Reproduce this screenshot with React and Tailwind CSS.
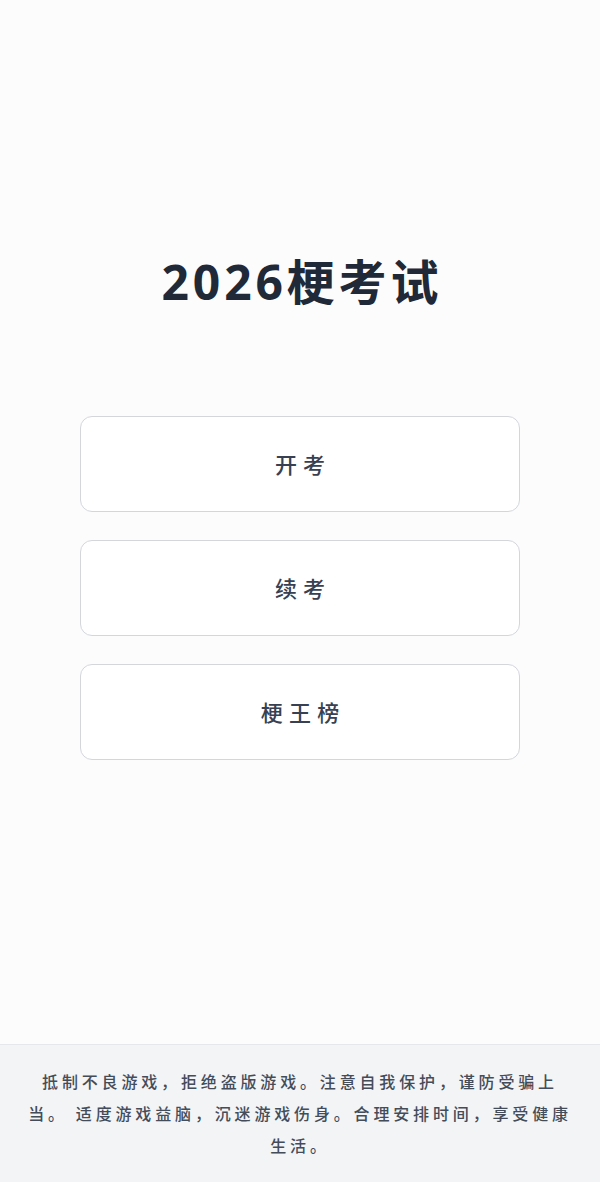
const menu = ['开考', '续考', '梗王榜']

export default function App() {
  return (
    <div
      className="min-h-[1182px] flex flex-col bg-[#fcfcfd]"
      style={{ fontFamily: '"Noto Sans", "Noto Sans CJK SC", sans-serif' }}
    >
      <main className="flex-1 flex flex-col items-center pt-[246px]">
        <h1 className="text-[48px] leading-[72px] font-bold text-[#1f2937] tracking-[0.08em] pl-[0.08em]">
          2026梗考试
        </h1>
        <div className="mt-[98px] w-[440px] flex flex-col gap-[28px]">
          {menu.map((label) => (
            <button
              key={label}
              className="h-[96px] rounded-xl border border-[#d4d6da] bg-white text-[22px] font-medium text-[#374151] tracking-[0.28em] pl-[0.28em]"
            >
              {label}
            </button>
          ))}
        </div>
      </main>
      <footer className="h-[138px] border-t border-[#e5e7eb] bg-[#f3f4f6] px-7 pt-[21px]">
        <p className="text-center text-[16px] leading-[32px] font-medium text-[#444c59] tracking-[0.24em]">
          抵制不良游戏，拒绝盗版游戏。注意自我保护，谨防受骗上当。 适度游戏益脑，沉迷游戏伤身。合理安排时间，享受健康生活。
        </p>
      </footer>
    </div>
  )
}
